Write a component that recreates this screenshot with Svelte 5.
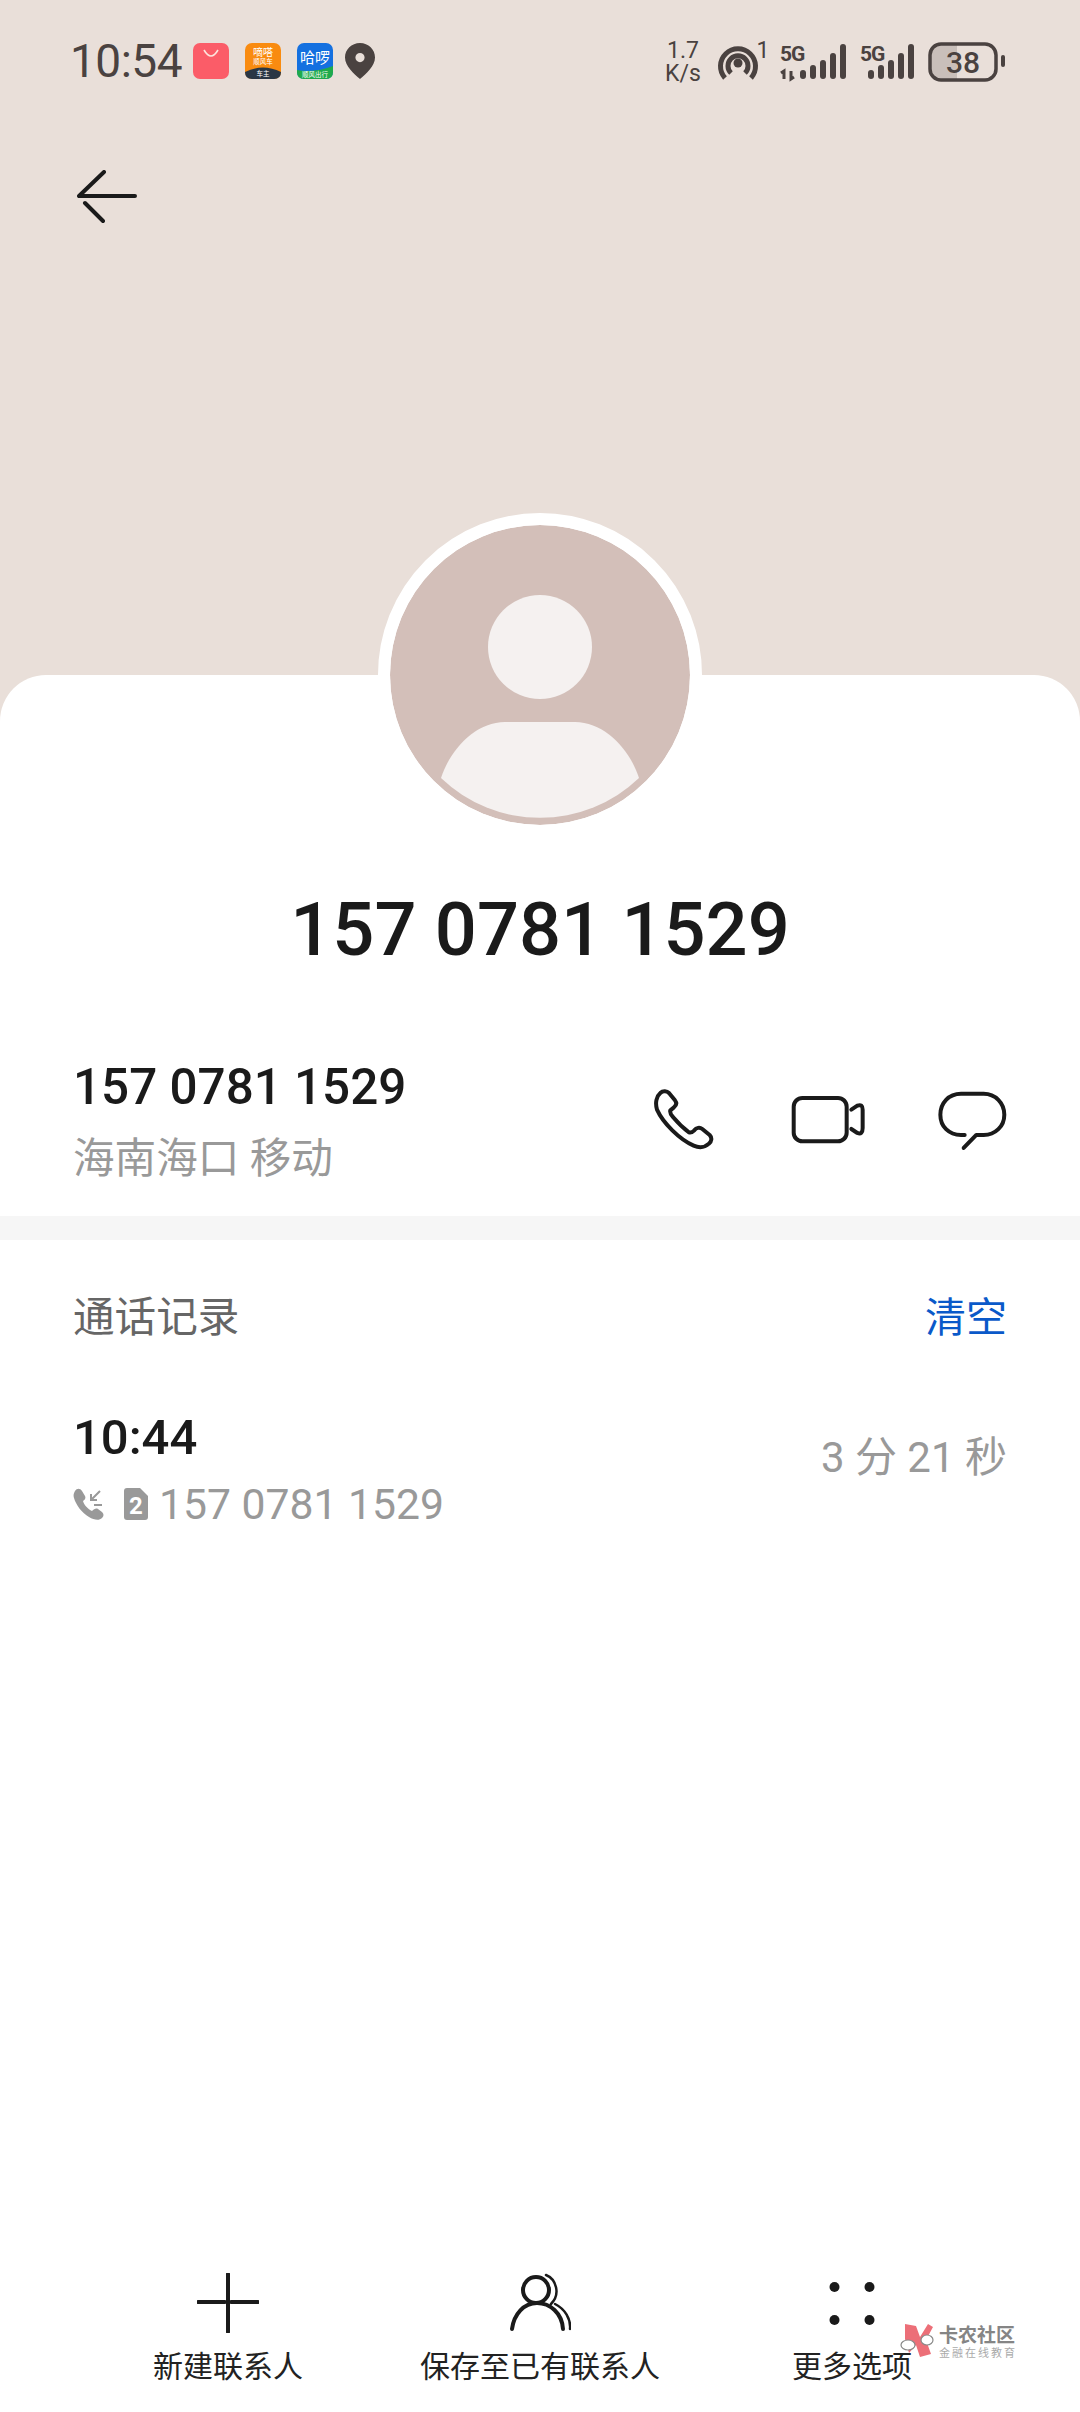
<script>
    const actions = [
        { label: '新建联系人', icon: 'plus' },
        { label: '保存至已有联系人', icon: 'person' },
        { label: '更多选项', icon: 'dots' }
    ];
</script>

<div class="page">
    <header class="top">
        <div class="status">
            <div class="status-left">
                <span class="clock">10:54</span>
                <svg class="app" viewBox="0 0 36 36">
                    <rect width="36" height="36" rx="7" fill="#fb5c68" />
                    <path d="M11 7 Q18 19 25 7" fill="none" stroke="#fde3dc" stroke-width="1.6" />
                </svg>
                <svg class="app" viewBox="0 0 36 36">
                    <rect width="36" height="36" rx="7" fill="#f98b10" />
                    <path d="M0 29 Q18 20 36 29 V29 Q36 36 29 36 H7 Q0 36 0 29 Z" fill="#2a3644" />
                    <text x="18" y="13" class="tiny big">嘀嗒</text>
                    <text x="18" y="21" class="tiny">顺风车</text>
                    <text x="18" y="33" class="tiny">车主</text>
                </svg>
                <svg class="app" viewBox="0 0 36 36">
                    <rect width="36" height="36" rx="7" fill="#1470e0" />
                    <path d="M0 27 Q18 30 36 23 V29 Q36 36 29 36 H7 Q0 36 0 29 Z" fill="#1faa4b" />
                    <text x="18" y="20" class="tiny large">哈啰</text>
                    <text x="18" y="34" class="tiny">顺风出行</text>
                </svg>
                <svg class="pin" viewBox="0 0 30 36">
                    <path fill-rule="evenodd" d="M15 0 C6.5 0 0 6.5 0 14.5 C0 23 9 31 15 36 C21 31 30 23 30 14.5 C30 6.5 23.5 0 15 0 Z M15 10 A4.6 4.6 0 1 0 15 19.2 A4.6 4.6 0 1 0 15 10 Z" fill="#4a4240" />
                </svg>
            </div>
            <svg class="status-right" viewBox="660 36 350 50">
                <text x="683" y="58" class="net">1.7</text>
                <text x="683" y="81" class="net">K/s</text>
                <path d="M725 78 A17.5 17.5 0 1 1 751 78 M731 73 A10 10 0 1 1 745 73" fill="none" stroke="#4a4240" stroke-width="5" />
                <circle cx="738" cy="63" r="4.5" fill="#4a4240" />
                <text x="763" y="58" class="net" font-size="20">1</text>

                <text x="780" y="61" class="five">5G</text>
                <path d="M784 79 V71 L781 73 M791 71 V79 L794 77" fill="none" stroke="#4a4240" stroke-width="3" />
                <g fill="#4a4240">
                    <rect x="800" y="70" width="6" height="9" rx="3" />
                    <rect x="810" y="65" width="6" height="14" rx="3" />
                    <rect x="820" y="60" width="6" height="19" rx="3" />
                    <rect x="830" y="53" width="6" height="26" rx="3" />
                    <rect x="840" y="44" width="6" height="35" rx="3" />
                </g>

                <text x="860" y="61" class="five">5G</text>
                <g fill="#4a4240">
                    <rect x="868" y="70" width="6" height="9" rx="3" />
                    <rect x="878" y="65" width="6" height="14" rx="3" />
                    <rect x="888" y="60" width="6" height="19" rx="3" />
                    <rect x="898" y="53" width="6" height="26" rx="3" />
                    <rect x="908" y="44" width="6" height="35" rx="3" />
                </g>

                <path d="M941 44 H957 V80 H941 Q930 80 930 69 V55 Q930 44 941 44 Z" fill="#c9bfba" />
                <rect x="930" y="44" width="66" height="36" rx="11" fill="none" stroke="#4a4240" stroke-width="3.5" />
                <text x="963" y="73" class="level">38</text>
                <rect x="1001" y="55" width="4" height="12" rx="2" fill="#4a4240" />
            </svg>
        </div>

        <button class="back" aria-label="返回">
            <svg viewBox="0 0 60 54" width="60" height="54">
                <path d="M27 2 L2 26 H58 M8 33 L26 51" fill="none" stroke="#1a1a1a" stroke-width="4" stroke-linecap="round" stroke-linejoin="round" />
            </svg>
        </button>
    </header>

    <main class="card">
        <svg class="avatar" viewBox="0 0 300 300">
            <circle cx="150" cy="150" r="150" fill="#d3bfb9" />
            <circle cx="150" cy="122" r="52" fill="#f5f1f0" />
            <path d="M51 253 C60 225 85 197 115 197 H185 C215 197 240 225 249 253 A143 143 0 0 1 51 253 Z" fill="#f5f1f0" />
        </svg>

        <h1 class="name">157 0781 1529</h1>

        <section class="contact">
            <div class="info">
                <div class="number">157 0781 1529</div>
                <div class="place">海南海口 移动</div>
            </div>
            <div class="contact-icons">
                <svg class="ic-phone" viewBox="100 85 190 190">
                    <path d="M122 100 C130 92 142 94 148 100 L166 122 C172 130 170 138 162 144 L152 152 C150 160 154 166 160 172 C175 190 190 205 208 218 C214 220 220 216 224 212 C230 204 240 202 248 208 L270 226 C278 234 276 246 268 252 C255 264 240 266 222 258 C180 240 130 190 112 150 C106 130 110 110 122 100 Z" />
                </svg>
                <svg class="ic-video" viewBox="510 85 230 190">
                    <rect x="521" y="115" width="159" height="130" rx="26" />
                    <path d="M694 150 L712 138 Q728 132 728 150 V205 Q728 226 712 220 L694 208" />
                </svg>
                <svg class="ic-chat" viewBox="950 85 210 190">
                    <path d="M1033 226 H1022 C985 226 960 200 960 165 C960 130 985 102 1022 102 H1090 C1125 102 1152 130 1152 165 C1152 200 1125 226 1090 226 H1068 L1030 265" />
                </svg>
            </div>
        </section>

        <div class="divider"></div>

        <section class="log">
            <div class="log-head">
                <span class="log-title">通话记录</span>
                <span class="clear">清空</span>
            </div>
            <div class="log-row">
                <div>
                    <div class="log-time">10:44</div>
                    <div class="log-sub">
                        <svg viewBox="0 0 32 32" width="32" height="32" fill="#999">
                            <path d="M2 3 C4 0 7 0 9 3 L12 8 C13 10 12 12 10 13 C11 17 15 21 19 23 C21 21 23 20 25 21 L29 24 C31 26 31 28 29 30 C26 33 21 32 16 29 C9 25 3 17 1 10 C0 7 1 5 2 3 Z" />
                            <path d="M27 3 L18 12 M18 6 V12 H24 M21 17 H29" fill="none" stroke="#999" stroke-width="2" />
                        </svg>
                        <svg class="sim" viewBox="0 0 24 32" width="24" height="32">
                            <path d="M3 0 H16 L24 8 V29 Q24 32 21 32 H3 Q0 32 0 29 V3 Q0 0 3 0 Z" fill="#999" />
                            <text x="12" y="26" class="sim-no">2</text>
                        </svg>
                        <span>157 0781 1529</span>
                    </div>
                </div>
                <div class="duration">3 分 21 秒</div>
            </div>
        </section>

        <nav class="bottom">
            {#each actions as action}
                <div class="action">
                    <svg viewBox="0 0 62 60" width="62" height="60">
                        {#if action.icon === 'plus'}
                            <path d="M31 1 V59 M1 29 H28 M34 29 H61" fill="none" stroke="#1a1a1a" stroke-width="4" stroke-linecap="round" />
                        {:else if action.icon === 'person'}
                            <g fill="none" stroke="#1a1a1a" stroke-width="4" stroke-linecap="round">
                                <circle cx="27" cy="17" r="13" />
                                <path d="M3 56 C5 41 15 30 28 30 C41 30 53 40 54 56" />
                                <path d="M37 2 C47 6 52 21 42 31" stroke-width="2.5" />
                                <path d="M46 31 C56 36 62 46 61 56" stroke-width="2.5" />
                            </g>
                        {:else}
                            <g fill="#1a1a1a">
                                <circle cx="13.5" cy="14" r="5" />
                                <circle cx="48.5" cy="14" r="5" />
                                <circle cx="13.5" cy="47" r="5" />
                                <circle cx="48.5" cy="47" r="5" />
                            </g>
                        {/if}
                    </svg>
                    <span>{action.label}</span>
                </div>
            {/each}
        </nav>
    </main>

    <div class="watermark">
        <svg viewBox="0 0 36 36" width="36" height="36">
            <path d="M5 1 L16 3 L20 14 L28 1 L33 4 L26 17 L31 31 L20 34 L16 22 L9 30 L5 16 Z" fill="#ec6f78" />
            <ellipse cx="8" cy="22" rx="7" ry="5" fill="#fff" stroke="#888" stroke-width="1.2" />
            <ellipse cx="27" cy="17" rx="6" ry="5" fill="#fff" stroke="#888" stroke-width="1.2" />
        </svg>
        <div class="mark-text">
            <div class="mark-title">卡农社区</div>
            <div class="mark-sub">金融在线教育</div>
        </div>
    </div>
</div>

<style>
    :global(body) {
        margin: 0;
        background: #fff;
    }

    .page {
        position: relative;
        width: 1080px;
        min-height: 2412px;
        display: flex;
        flex-direction: column;
        background: #e9dfd9;
        font-family: Roboto, "Noto Sans CJK SC", sans-serif;
        color: #1a1a1a;
        overflow: hidden;
    }

    .top {
        height: 675px;
        box-sizing: border-box;
        padding-top: 36px;
    }

    .status {
        display: flex;
        justify-content: space-between;
        align-items: flex-start;
        padding: 0 70px;
    }

    .status-left {
        display: flex;
        align-items: center;
        height: 50px;
    }

    .clock {
        width: 123px;
        font-size: 46px;
        letter-spacing: -0.5px;
        color: #4a4240;
        line-height: 52px;
    }

    .app {
        width: 36px;
        height: 36px;
        margin-right: 16px;
    }

    .pin {
        width: 30px;
        height: 36px;
        margin-left: -4px;
    }

    .tiny {
        font-size: 6.5px;
        fill: #fff;
        text-anchor: middle;
    }

    .tiny.big {
        font-size: 10px;
    }

    .tiny.large {
        font-size: 15px;
    }

    .status-right {
        width: 350px;
        height: 50px;
    }

    .net {
        font-size: 23px;
        fill: #4a4240;
        text-anchor: middle;
    }

    .five {
        font-size: 21px;
        font-weight: 700;
        fill: #4a4240;
        letter-spacing: -1px;
    }

    .level {
        font-size: 30px;
        font-weight: 500;
        fill: #4a4240;
        text-anchor: middle;
    }

    .back {
        display: block;
        margin: 84px 0 0 77px;
        padding: 0;
        border: none;
        background: none;
    }

    .back svg {
        display: block;
    }

    .card {
        flex: 1;
        display: flex;
        flex-direction: column;
        background: #fff;
        border-radius: 46px 46px 0 0;
    }

    .avatar {
        box-sizing: content-box;
        width: 300px;
        height: 300px;
        margin: -162px auto 0;
        border: 12px solid #fff;
        border-radius: 50%;
        background: #fff;
    }

    .name {
        margin: 43px 0 0;
        font-size: 74px;
        font-weight: 500;
        line-height: 100px;
        text-align: center;
    }

    .contact {
        display: flex;
        justify-content: space-between;
        height: 236px;
        box-sizing: border-box;
        padding: 77px 73px 0;
    }

    .number {
        font-size: 49.4px;
        font-weight: 500;
        line-height: 60px;
    }

    .place {
        margin-top: 12px;
        font-size: 41.6px;
        line-height: 60px;
        color: #999;
    }

    .contact-icons {
        display: flex;
        height: 64px;
        margin-top: 31px;
    }

    .contact-icons svg {
        height: 63.3px;
        fill: none;
        stroke: #1a1a1a;
        stroke-width: 12;
        stroke-linecap: round;
        stroke-linejoin: round;
    }

    .ic-phone {
        width: 63.3px;
    }

    .ic-video {
        width: 76.7px;
        margin-left: 74px;
    }

    .ic-chat {
        width: 70px;
        margin-left: 70px;
    }

    .divider {
        height: 24px;
        background: #f6f6f6;
    }

    .log {
        flex: 1;
        padding: 48px 73px 0;
    }

    .log-head {
        display: flex;
        justify-content: space-between;
        line-height: 60px;
    }

    .log-title {
        font-size: 41.6px;
        color: #666;
    }

    .clear {
        font-size: 41px;
        color: #0a59c9;
    }

    .log-row {
        display: flex;
        justify-content: space-between;
        align-items: center;
        margin-top: 60px;
    }

    .log-time {
        font-size: 49px;
        font-weight: 500;
        line-height: 60px;
    }

    .log-sub {
        display: flex;
        align-items: center;
        margin-top: 11px;
        font-size: 42.7px;
        line-height: 50px;
        color: #999;
    }

    .sim {
        margin: 0 11px 0 19px;
    }

    .sim-no {
        font-size: 24px;
        font-weight: 700;
        fill: #fff;
        text-anchor: middle;
    }

    .duration {
        margin-top: -30px;
        font-size: 42px;
        color: #999;
    }

    .bottom {
        display: grid;
        grid-template-columns: repeat(3, 1fr);
        padding: 0 72px 25px;
    }

    .action {
        display: flex;
        flex-direction: column;
        align-items: center;
        gap: 14px;
        font-size: 30px;
        line-height: 40px;
        color: #222;
        white-space: nowrap;
    }

    .watermark {
        position: absolute;
        left: 900px;
        top: 2323px;
        display: flex;
        gap: 3px;
    }

    .mark-text {
        padding-top: 2px;
    }

    .mark-title {
        font-size: 19px;
        font-weight: 700;
        line-height: 22px;
        color: #858585;
        white-space: nowrap;
    }

    .mark-sub {
        font-size: 11px;
        line-height: 14px;
        letter-spacing: 2px;
        color: #aaa;
        white-space: nowrap;
    }
</style>
